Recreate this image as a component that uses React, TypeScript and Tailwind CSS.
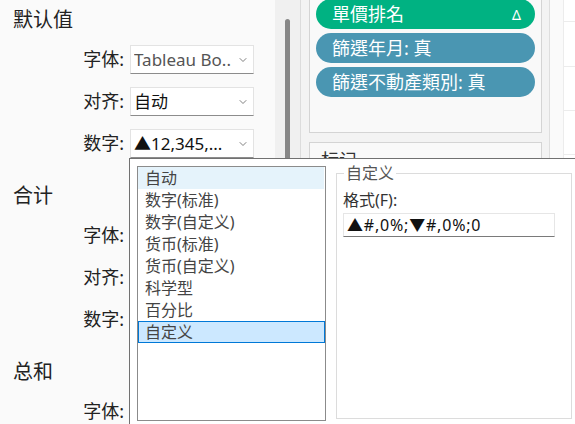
import { ChevronDown } from "lucide-react"

const font = "font-['Noto_Sans','Noto_Sans_CJK_SC',sans-serif]"
const fontTC = "font-['Noto_Sans','Noto_Sans_CJK_TC',sans-serif]"

interface Row {
  label: string
  value?: string
  muted?: boolean
}

function Select({ value, muted }: { value?: string; muted?: boolean }) {
  return (
    <div className="flex h-[29px] w-[124px] items-center justify-between border border-[#e3e3e3] border-b-[#8c8c8c] bg-white pl-[3px] pr-[4px]">
      <span
        className={
          muted
            ? "truncate text-[17px] leading-[27px] text-[#555]"
            : "truncate text-[17px] leading-[27px] text-[#111]"
        }
      >
        {value}
      </span>
      <ChevronDown className="h-[12px] w-[12px] shrink-0 text-[#555]" strokeWidth={1.5} />
    </div>
  )
}

function Section({ title, rows, first }: { title: string; rows: Row[]; first?: boolean }) {
  return (
    <div className={first ? "" : "mt-[26px]"}>
      <div className="h-[24px] pl-[13px] text-[20px] leading-[24px] text-[#222]">{title}</div>
      <div className="mt-[13px] flex flex-col gap-[13px]">
        {rows.map((row) => (
          <div key={row.label} className="flex h-[29px] items-center">
            <span className="w-[125px] pr-[1px] text-right text-[18px] leading-[29px] text-[#222]">
              {row.label}
            </span>
            <div className="ml-[5px]">
              <Select value={row.value} muted={row.muted} />
            </div>
          </div>
        ))}
      </div>
    </div>
  )
}

const rows: Row[] = [
  { label: "字体:", value: "Tableau Bo..", muted: true },
  { label: "对齐:", value: "自动" },
  { label: "数字:", value: "▲12,345,..." },
]

// rows lying under the popup: their values are covered
const coveredRows: Row[] = [{ label: "字体:" }, { label: "对齐:" }, { label: "数字:" }]

const formats = ["自动", "数字(标准)", "数字(自定义)", "货币(标准)", "货币(自定义)", "科学型", "百分比", "自定义"]

export default function App() {
  return (
    <div className={`relative flex h-[424px] w-[575px] overflow-hidden bg-white ${font}`}>
      {/* left format pane */}
      <div className="w-[275px] shrink-0 bg-[#fafafa] pt-[8px]">
        <Section title="默认值" rows={rows} first />
        <Section title="合计" rows={coveredRows} />
        <Section title="总和" rows={coveredRows.slice(0, 1)} />
      </div>

      {/* scroll strip */}
      <div className="w-[25px] shrink-0 bg-[#f0f0f0] pl-[10px] pt-[19px]">
        <div className="h-full w-[5px] rounded-t-full bg-[#878787]" />
      </div>

      {/* cards shelf, the part below the popup's top is hidden */}
      <div className="h-[158px] w-[249px] shrink-0 self-start overflow-hidden border-l border-[#dcdcdc] bg-[#f3f3f3] pl-[8px] pr-[7px]">
        <div className="-mt-[10px] h-[143px] border border-[#d4d4d4] bg-[#f9f9f9] px-[6px] pt-[8px]">
          <div className={`flex flex-col gap-[4px] ${fontTC}`}>
            <div className="flex h-[30px] items-center justify-between rounded-full bg-[#00b282] pl-[16px] pr-[14px] text-[18px] text-white">
              <span>單價排名</span>
              <span className="text-[14px]">Δ</span>
            </div>
            <div className="flex h-[30px] items-center rounded-full bg-[#4a96b2] pl-[16px] text-[18px] text-white">
              篩選年月: 真
            </div>
            <div className="flex h-[30px] items-center rounded-full bg-[#4a96b2] pl-[16px] text-[18px] text-white">
              篩選不動產類別: 真
            </div>
          </div>
        </div>
        <div className="mt-[9px] h-[120px] border border-[#d4d4d4] bg-[#f9f9f9] pl-[11px] pt-[4px] text-[18px] text-[#333]">
          标记
        </div>
      </div>

      {/* view */}
      <div className="flex flex-1 border-l border-[#dedede]">
        <div className="w-[13px] bg-[#fafafa]" />
        <div className="flex flex-1 flex-col border-l border-[#ececec] bg-white">
          <div className="h-[22px] border-b border-[#ececec]" />
          <div className="h-[45px] border-b border-[#ececec]" />
          <div className="h-[44px] border-b border-[#ececec]" />
          <div className="h-[44px] border-b border-[#ececec]" />
        </div>
      </div>

      {/* number format popup */}
      <div className="absolute bottom-0 left-[129px] right-0 top-[158px] flex items-start border-l border-t border-[#717171] bg-white pl-[7px] pt-[7px]">
        <div className="h-[255px] w-[189px] shrink-0 border border-[#8b8b8b] bg-white">
          <div className="flex flex-col">
            {formats.map((f, i) =>
              i === formats.length - 1 ? (
                <div
                  key={f}
                  className="h-[22px] border border-[#0078d7] bg-[#cce8ff] pl-[6px] text-[16px] leading-[20px] text-[#444]"
                >
                  {f}
                </div>
              ) : (
                <div
                  key={f}
                  className={
                    i === 0
                      ? "mr-[1px] h-[22px] bg-[#e5f3fb] pl-[7px] text-[16px] leading-[22px] text-[#444]"
                      : "h-[22px] pl-[7px] text-[16px] leading-[22px] text-[#444]"
                  }
                >
                  {f}
                </div>
              )
            )}
          </div>
        </div>

        <fieldset className="-mt-[3px] ml-[10px] h-[256px] w-[236px] shrink-0 border border-[#dcdcdc] pl-[6px]">
          <legend className="ml-[1px] px-[2px] text-[16px] leading-[20px] text-[#555]">自定义</legend>
          <div className="mt-[7px] text-[16px] leading-[20px] text-[#333]">格式(F):</div>
          <div className="mt-[3px] flex h-[24px] w-[212px] items-center border border-[#e6e6e6] border-b-[#7a7a7a] pl-[3px] text-[16px] tracking-[0.8px] text-[#111]">
            ▲#,0%;▼#,0%;0
          </div>
        </fieldset>
      </div>
    </div>
  )
}
